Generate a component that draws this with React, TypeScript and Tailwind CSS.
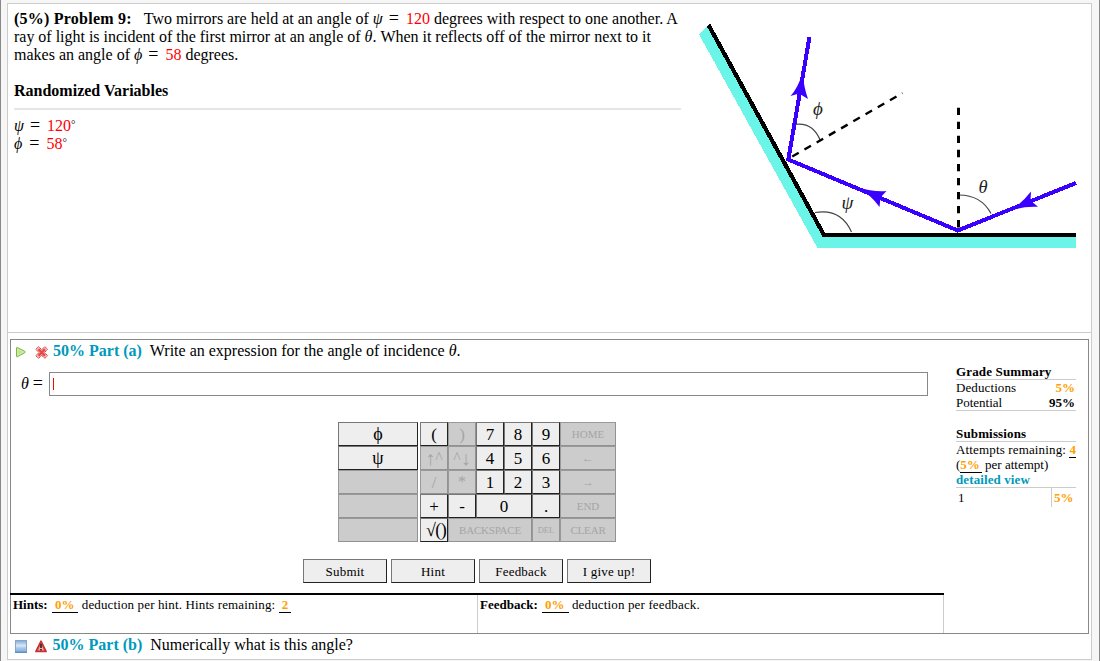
import React from "react";

const mathFont = "font-['Liberation_Serif','Times_New_Roman',serif] italic";

function MirrorDiagram() {
  return (
    <svg className="block h-[232px] w-[379px]" viewBox="698 20 379 232">
      <g shapeRendering="crispEdges">
        <polygon points="699,34.5 708.5,25 824,235 1076,235 1076,248 817.5,248" fill="#6bf5e8" />
        <polyline points="708.5,25 824,235 1076,235" fill="none" stroke="#000" strokeWidth="4.2" />
      </g>
      <g fill="none" stroke="#444" strokeWidth="1.2">
        <path d="M795 124.5 Q813 122 820.5 141" />
        <path d="M815 212.5 Q841 208 851.5 232" />
        <path d="M959 195 Q981 195 991 213.5" />
      </g>
      <g fill="none" stroke="#000">
        <path d="M790.5 157.5 L902.5 93" strokeWidth="2.4" strokeDasharray="7.5 6.6" strokeDashoffset="-2" />
        <path d="M958.5 107.7 V230" strokeWidth="3" strokeDasharray="7.3 6.75" />
      </g>
      <g fill="none" stroke="#3a00ff" strokeWidth="4" shapeRendering="crispEdges">
        <path d="M809.5 37 L788.3 159.5 L957.8 230.5 L1076 183" />
      </g>
      <g fill="#3a00ff">
        <path d="M802.5 73 Q798 88 790.5 96 L799 93.5 L808 99 Q804 88 802.5 73 Z" />
        <path d="M858 187.5 Q873 192 886.5 191 L880.5 197.5 L879.5 207 Q871 195 858 187.5 Z" />
        <path d="M1011 210.5 Q1023 202 1031 191.5 L1030.5 200.5 L1038 206.8 Q1024 206 1011 210.5 Z" />
      </g>
      <g className={mathFont} fill="#222">
        <text x="813" y="114.5" fontSize="19">ϕ</text>
        <text x="841.5" y="208.5" fontSize="19">ψ</text>
        <text x="978.5" y="193" fontSize="18.5">θ</text>
      </g>
    </svg>
  );
}

function PlayIcon() {
  return (
    <svg className="h-[12px] w-[12px]" viewBox="0 0 12 12">
      <path d="M1.5 1.9 Q1.5 1.2 2.2 1.5 L9.8 5.3 Q10.8 6 9.8 6.7 L2.2 10.8 Q1.5 11 1.5 10.3 Z" fill="#bfe48a" stroke="#7db54a" />
      <path d="M2.7 3 L8.6 6 L2.7 9.2 Z" fill="none" stroke="#dcf3bd" strokeWidth="0.7" />
    </svg>
  );
}

function WrongIcon() {
  return (
    <svg className="h-[13px] w-[14px]" viewBox="0 0 14 13">
      <path
        d="M3.5 0.7 L6.7 3.6 L9.9 0.7 L12.6 3.3 L9.5 6.5 L12.6 9.7 L9.9 12.3 L6.7 9.4 L3.5 12.3 L0.8 9.7 L3.9 6.5 L0.8 3.3 Z"
        fill="#f9bcbc"
        stroke="#d43c3c"
        strokeDasharray="1.6 0.5"
        strokeLinejoin="round"
      />
      <path d="M3.5 3.2 L10 9.8 M10 3.2 L3.5 9.8" stroke="#e54646" strokeWidth="2.3" />
    </svg>
  );
}

function SquareIcon() {
  return (
    <svg className="h-[13px] w-[12px]" viewBox="0 0 12 13">
      <defs>
        <linearGradient id="sq" x1="0" y1="0" x2="0" y2="1">
          <stop offset="0" stopColor="#7faad6" />
          <stop offset="0.45" stopColor="#d9e8f7" />
          <stop offset="0.65" stopColor="#a9c9ea" />
          <stop offset="1" stopColor="#7fb0e2" />
        </linearGradient>
      </defs>
      <rect x="0.5" y="0.5" width="11" height="11.5" fill="url(#sq)" stroke="#86a5c8" />
      <path d="M0 12.3 H12" stroke="#4f7cae" />
    </svg>
  );
}

function WarningIcon() {
  return (
    <svg className="h-[13px] w-[12px]" viewBox="0 0 12 13">
      <path d="M6 1.3 L11 11.4 H1 Z" fill="#e86a6a" stroke="#c63232" strokeWidth="1.8" strokeLinejoin="round" />
      <path d="M6 4 L8.8 10.3 H3.2 Z" fill="#f0a8a8" />
      <path d="M6 4 V8 M6 8.9 V10.5" stroke="#222" strokeWidth="1.6" />
    </svg>
  );
}

function Eq() {
  return <span className="mr-[7px] ml-[6px] text-[18px] leading-[12px]">=</span>;
}

function Deg() {
  return <span className="relative -top-[3px] text-[11px] leading-[8px]">°</span>;
}

type KeyProps = { children?: React.ReactNode; off?: boolean; className?: string };

function Key({ children, off, className = "text-[17px]" }: KeyProps) {
  return (
    <button
      className={`flex h-6 items-center justify-center overflow-hidden border leading-none whitespace-nowrap ${
        off
          ? "border-t-[#999] border-r-[#929292] border-b-[#929292] border-l-[#999] bg-[#ccc] text-[#a5a5a5]"
          : "border-t-[#777] border-r-[#222] border-b-[#222] border-l-[#777] bg-[#eee] text-black"
      } ${className}`}
    >
      {children}
    </button>
  );
}

function Keypad() {
  return (
    <div className="flex gap-[2px]">
      <div className="flex w-[80px] flex-col">
        <Key className="text-[18px]">ϕ</Key>
        <Key className="text-[18px]">ψ</Key>
        <Key off />
        <Key off />
        <Key off />
      </div>
      <div className="grid grid-cols-[28px_28px_28px_28px_28px_56px]">
        <Key>(</Key>
        <Key off>)</Key>
        <Key>7</Key>
        <Key>8</Key>
        <Key>9</Key>
        <Key off className="text-[11px]">HOME</Key>
        <Key off className="text-[16px]"><span className="text-[20px]">↑</span>^</Key>
        <Key off className="text-[16px]">^<span className="text-[20px]">↓</span></Key>
        <Key>4</Key>
        <Key>5</Key>
        <Key>6</Key>
        <Key off className="text-[12px]">←</Key>
        <Key off>/</Key>
        <Key off className="text-[16px]">*</Key>
        <Key>1</Key>
        <Key>2</Key>
        <Key>3</Key>
        <Key off className="text-[12px]">→</Key>
        <Key>+</Key>
        <Key>-</Key>
        <Key className="col-span-2 text-[17px]">0</Key>
        <Key>.</Key>
        <Key off className="text-[11px]">END</Key>
        <Key className="pl-[4px] text-[18px] tracking-[-0.6px]">√()</Key>
        <Key off className="col-span-3 text-[11px] tracking-[-0.2px]">BACKSPACE</Key>
        <Key off className="text-[8.5px]">DEL</Key>
        <Key off className="text-[11px] tracking-[-0.2px]">CLEAR</Key>
      </div>
    </div>
  );
}

function ActionButton({ children }: { children: React.ReactNode }) {
  return (
    <button className="flex h-6 w-[84px] items-center justify-center border border-t-[#777] border-r-[#222] border-b-[#222] border-l-[#777] bg-[#eee] pt-[2px] text-[13px] tracking-[0.2px]">
      {children}
    </button>
  );
}

function Summary() {
  return (
    <aside className="w-[120px] pt-[24px] text-[13px] leading-[15px]">
      <h3 className="h-[16px] border-b border-[#ccc] font-bold whitespace-nowrap tracking-[0.15px]">Grade Summary</h3>
      <div className="border-b border-[#ccc] pr-px">
        <div className="flex justify-between">
          <span className="tracking-[0.1px]">Deductions</span>
          <b className="text-[#ffa000]">5%</b>
        </div>
        <div className="flex justify-between">
          <span>Potential</span>
          <b>95%</b>
        </div>
      </div>
      <h3 className="mt-[15px] h-[16px] border-b border-[#ccc] font-bold tracking-[0.15px]">Submissions</h3>
      <div className="h-[46px] border-b border-[#ccc] whitespace-nowrap">
        <div className="tracking-[0.15px]">
          Attempts remaining: <b className="border-b border-black text-[#ffa000]">4</b>
        </div>
        <div>
          (<b className="border-b border-black pr-[2px] text-[#ffa000]">5%</b> per attempt)
        </div>
        <div className="font-bold tracking-[0.1px] text-[#0099bb]">detailed view</div>
      </div>
      <div className="flex h-[19px] justify-between">
        <span className="pt-[2px] pl-[2px]">1</span>
        <b className="w-[25px] border-l border-[#ccc] pt-[2px] pl-[2px] text-[#ffa000]">5%</b>
      </div>
    </aside>
  );
}

export default function App() {
  return (
    <div className="h-[661px] w-[1100px] overflow-hidden border-x border-[#888] bg-[#f6f6f6] pt-[3px] pr-[7px] pl-[6px] font-['Liberation_Serif','Times_New_Roman',serif] text-[16px] text-black">
      <main className="h-[657px] border border-[#ccc] bg-white">
        <section className="flex h-[329px] justify-between border-b border-[#ccc] pr-[14px] pl-[6px]">
          <div className="w-[667px] pt-[6px] leading-[18px] whitespace-nowrap">
            <p className="h-[18px]">
              <b className="mr-[12px] tracking-[0.23px]">(5%) Problem 9:</b>
              Two mirrors are held at an angle of <i>ψ</i>
              <Eq />
              <span className="text-[#f00]">120</span> degrees with respect to one another. A
            </p>
            <p className="h-[18px] tracking-[-0.015px]">
              ray of light is incident of the first mirror at an angle of <i>θ</i>. When it reflects off of the mirror next to it
            </p>
            <p className="h-[18px]">
              makes an angle of <i>ϕ</i>
              <Eq />
              <span className="text-[#f00]">58</span> degrees.
            </p>
            <h2 className="mt-[18px] font-bold">Randomized Variables</h2>
            <hr className="mt-[8px] mb-[7px] border-t-2 border-[#e6e6e6]" />
            <p className="h-[18px] leading-[18px]">
              <i>ψ</i>
              <Eq />
              <span className="text-[#f00]">120</span>
              <Deg />
            </p>
            <p className="h-[17px] leading-[17px]">
              <i className="mr-px">ϕ</i>
              <Eq />
              <span className="text-[#f00]">58</span>
              <Deg />
            </p>
          </div>
          <div className="pt-[16px]">
            <MirrorDiagram />
          </div>
        </section>

        <section className="mt-[6px] mr-[2px] ml-[2px] flex h-[295px] justify-between border border-[#888] pr-[12px]">
          <div className="flex w-[933px] flex-col">
            <div className="flex h-[22px] items-center pl-[4px]">
              <span className="mt-[2px]"><PlayIcon /></span>
              <span className="mt-[2px] ml-[8px] flex"><WrongIcon /></span>
              <b className="ml-[4px] text-[#0099bb]">50% Part (a)</b>
              <span className="ml-[8px]">
                Write an expression for the angle of incidence <i>θ</i>.
              </span>
            </div>
            <div className="mt-[10px] flex h-[24px] items-center pl-[10px]">
              <span className="w-[28px] whitespace-nowrap">
                <i>θ</i> <span className="text-[18px] leading-none">=</span>
              </span>
              <div className="flex h-[24px] w-[879px] shrink-0 items-center border border-[#888] pl-[3px]">
                <span className="h-[12px] w-px shrink-0 bg-[#ff0000]" />
              </div>
            </div>
            <div className="mt-[26px] pl-[327px]">
              <Keypad />
            </div>
            <div className="mt-[17px] flex gap-[4px] pl-[292px]">
              <ActionButton>Submit</ActionButton>
              <ActionButton>Hint</ActionButton>
              <ActionButton>Feedback</ActionButton>
              <ActionButton>I give up!</ActionButton>
            </div>
            <div className="mt-[10px] -ml-px flex flex-1 border-t-2 border-black text-[13px] leading-[15px] whitespace-nowrap">
              <div className="w-[467px] pt-[2px] pl-[3px]">
                <b>Hints:</b> <b className="ml-px border-b border-black pr-[4px] pl-[3px] text-[#ffa000]">0%</b>
                <span className="tracking-[0.13px]"> deduction per hint. Hints remaining: </span>
                <b className="border-b border-black px-[3px] text-[#ffa000]">2</b>
              </div>
              <div className="flex-1 border-x border-[#ccc] pt-[2px] pl-[2px]">
                <b>Feedback:</b> <b className="ml-px border-b border-black pr-[4px] pl-[3px] text-[#ffa000]">0%</b>
                <span className="tracking-[0.15px]"> deduction per feedback.</span>
              </div>
            </div>
          </div>
          <Summary />
        </section>

        <section className="flex h-[21px] items-center pl-[7px]">
          <span className="mt-[4px]"><SquareIcon /></span>
          <span className="mt-[4px] ml-[8px]"><WarningIcon /></span>
          <b className="ml-[5.5px] text-[#0099bb]">50% Part (b)</b>
          <span className="ml-[8px]">Numerically what is this angle?</span>
        </section>
      </main>
    </div>
  );
}
